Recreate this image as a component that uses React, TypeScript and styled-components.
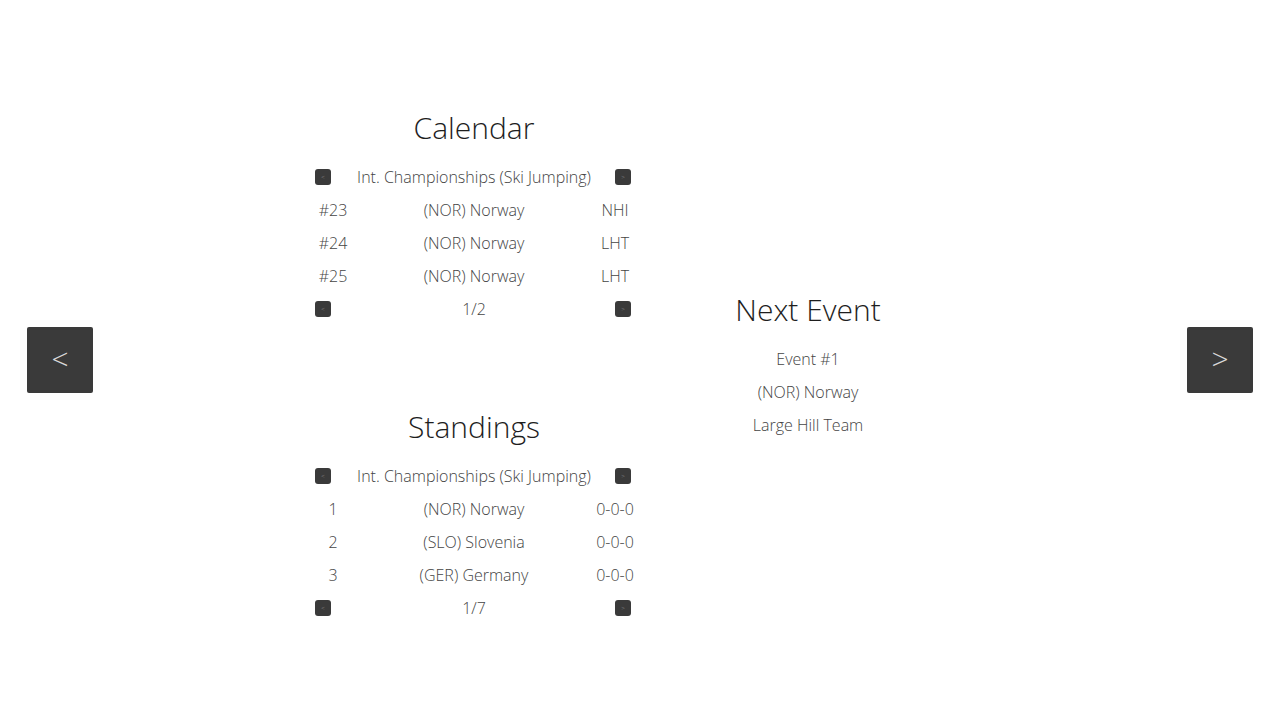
import React from 'react';
import styled, { createGlobalStyle } from 'styled-components';

const GlobalStyle = createGlobalStyle`
  html, body {
    margin: 0;
    padding: 0;
    background: #ffffff;
    font-family: "Open Sans", "DejaVu Sans", sans-serif;
    font-weight: 300;
  }
`;

const Page = styled.div`
  height: 100vh;
  display: flex;
  align-items: center;
  justify-content: space-between;
  padding: 0 27px;
  box-sizing: border-box;
`;

const NavButton = styled.button`
  width: 66px;
  height: 66px;
  border: none;
  border-radius: 2px;
  background: #3a3a3a;
  color: #d8d8d8;
  font-family: "Open Sans", sans-serif;
  font-weight: 300;
  font-size: 30px;
  line-height: 1;
  padding: 0 0 2px;
  display: flex;
  align-items: center;
  justify-content: center;
  cursor: pointer;
`;

const Content = styled.div`
  display: grid;
  grid-template-columns: 318px 318px;
  column-gap: 16px;
  align-items: center;
  padding: 9px 0 0 2px;
`;

const Column = styled.div`
  display: flex;
  flex-direction: column;
  gap: 78px;
`;

const Block = styled.section`
  display: flex;
  flex-direction: column;
`;

const Title = styled.h2`
  margin: 0 0 10px;
  height: 46px;
  line-height: 46px;
  text-align: center;
  font-size: 30px;
  font-weight: 300;
  color: #1e1e1e;
`;

const Row = styled.div`
  display: grid;
  grid-template-columns: 36px 1fr 36px;
  align-items: center;
  height: 33px;
  font-size: 16px;
  color: #444;
`;

const Cell = styled.div<{ $align?: 'start' | 'end' }>`
  white-space: nowrap;
  display: flex;
  justify-content: ${({ $align }) =>
    $align === 'start' ? 'flex-start' : $align === 'end' ? 'flex-end' : 'center'};
`;

const MiniButton = styled.button<{ $edge?: number }>`
  width: 16px;
  height: 16px;
  padding: 0;
  margin-right: ${({ $edge }) => $edge ?? 0}px;
  border: none;
  border-radius: 3px;
  background: #3a3a3a;
  color: #777;
  font-size: 6px;
  line-height: 16px;
  cursor: pointer;
`;

const InfoLine = styled.div`
  height: 33px;
  line-height: 33px;
  text-align: center;
  font-size: 16px;
  color: #444;
`;

type Entry = [string, string, string];

const calendar: Entry[] = [
  ['#23', '(NOR) Norway', 'NHI'],
  ['#24', '(NOR) Norway', 'LHT'],
  ['#25', '(NOR) Norway', 'LHT'],
];

const standings: Entry[] = [
  ['1', '(NOR) Norway', '0-0-0'],
  ['2', '(SLO) Slovenia', '0-0-0'],
  ['3', '(GER) Germany', '0-0-0'],
];

function Pager({ label }: { label: string }) {
  return (
    <Row>
      <Cell $align="start">
        <MiniButton>&lt;</MiniButton>
      </Cell>
      <Cell>{label}</Cell>
      <Cell $align="end">
        <MiniButton $edge={2}>&gt;</MiniButton>
      </Cell>
    </Row>
  );
}

function Table({ title, rows, page }: { title: string; rows: Entry[]; page: string }) {
  return (
    <Block>
      <Title>{title}</Title>
      <Pager label="Int. Championships (Ski Jumping)" />
      {rows.map(([a, b, c]) => (
        <Row key={a}>
          <Cell>{a}</Cell>
          <Cell>{b}</Cell>
          <Cell>{c}</Cell>
        </Row>
      ))}
      <Pager label={page} />
    </Block>
  );
}

export default function App() {
  return (
    <>
      <GlobalStyle />
      <Page>
        <NavButton>&lt;</NavButton>
        <Content>
          <Column>
            <Table title="Calendar" rows={calendar} page="1/2" />
            <Table title="Standings" rows={standings} page="1/7" />
          </Column>
          <Block>
            <Title>Next Event</Title>
            <InfoLine>Event #1</InfoLine>
            <InfoLine>(NOR) Norway</InfoLine>
            <InfoLine>Large Hill Team</InfoLine>
          </Block>
        </Content>
        <NavButton>&gt;</NavButton>
      </Page>
    </>
  );
}
